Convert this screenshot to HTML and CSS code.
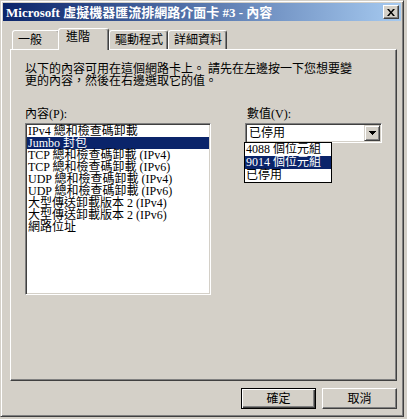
FILE: index.html
```html
<!DOCTYPE html>
<html lang="zh-Hant">
<head>
    <meta charset="UTF-8">
    <title>Microsoft 虛擬機器匯流排網路介面卡 #3 - 內容</title>
    <link rel="stylesheet" href="styles.css">
</head>
<body>

    <!-- Property sheet window -->
    <div class="window">
        <div class="titlebar">
            <span class="title">Microsoft 虛擬機器匯流排網路介面卡 #3 - 內容</span>
            <button class="close" type="button" aria-label="關閉">
                <svg width="8" height="7" viewBox="0 0 8 7"><path d="M0 0h2l2 2.5L6 0h2L5 3.5 8 7H6L4 4.5 2 7H0l3-3.5z"/></svg>
            </button>
        </div>

        <div class="content">
            <!-- Tabs -->
            <div class="tabs">
                <div class="tab tab-general">一般</div>
                <div class="tab tab-active">進階</div>
                <div class="tab tab-wide">驅動程式</div>
                <div class="tab tab-wide">詳細資料</div>
            </div>

            <!-- Advanced page -->
            <div class="panel">
                <p class="intro">以下的內容可用在這個網路卡上。 請先在左邊按一下您想要變更的內容，然後在右邊選取它的值。</p>

                <div class="fields">
                    <div class="field-list">
                        <label class="field-label">內容(P):</label>
                        <ul class="listbox">
                            <li>IPv4 總和檢查碼卸載</li>
                            <li class="selected">Jumbo 封包</li>
                            <li>TCP 總和檢查碼卸載 (IPv4)</li>
                            <li>TCP 總和檢查碼卸載 (IPv6)</li>
                            <li>UDP 總和檢查碼卸載 (IPv4)</li>
                            <li>UDP 總和檢查碼卸載 (IPv6)</li>
                            <li>大型傳送卸載版本 2 (IPv4)</li>
                            <li>大型傳送卸載版本 2 (IPv6)</li>
                            <li>網路位址</li>
                        </ul>
                    </div>

                    <div class="field-value">
                        <label class="field-label value-label">數值(V):</label>
                        <div class="combo">
                            <span class="combo-text">已停用</span>
                            <span class="combo-button">
                                <svg width="7" height="4" viewBox="0 0 7 4"><path d="M0 0h7v1H6v1H5v1H4v1H3V3H2V2H1V1H0z"/></svg>
                            </span>
                            <ul class="dropdown">
                                <li>4088 個位元組</li>
                                <li class="selected">9014 個位元組</li>
                                <li>已停用</li>
                            </ul>
                        </div>
                    </div>
                </div>
            </div>

            <!-- Dialog buttons -->
            <div class="actions">
                <button class="btn btn-default" type="button">確定</button>
                <button class="btn" type="button">取消</button>
            </div>
        </div>
    </div>

</body>
</html>
```

FILE: styles.css
```css
* {
    box-sizing: border-box;
}

body {
    margin: 0;
    background-color: #d4d0c8;
    font-family: "Liberation Serif", "Noto Sans CJK TC", serif;
    font-size: 12px;
    line-height: 12px;
    color: #000;
}

.window {
    width: 404px;
    height: 417px;
    padding: 2px;
    border: 1px solid;
    border-color: #d4d0c8 #404040 #404040 #d4d0c8;
    box-shadow: inset 1px 1px #fff, inset -1px -1px #808080;
    display: flex;
    flex-direction: column;
}

/* Title bar */
.titlebar {
    height: 18px;
    padding: 0 2px 0 3px;
    background: linear-gradient(to right, #0a246a, #a6caf0);
    display: flex;
    align-items: center;
    justify-content: space-between;
}

.title {
    color: #fff;
    font-weight: bold;
    font-size: 13px;
    line-height: 13px;
    white-space: nowrap;
}

.close {
    width: 16px;
    height: 14px;
    margin: 0;
    padding: 0;
    background-color: #d4d0c8;
    border: 1px solid;
    border-color: #fff #404040 #404040 #fff;
    box-shadow: inset -1px -1px #808080;
    display: flex;
    align-items: center;
    justify-content: center;
}

.content {
    flex: 1;
    padding: 7px 4px 0 7px;
    display: flex;
    flex-direction: column;
}

/* Tabs */
.tabs {
    height: 21px;
    padding-left: 2px;
    display: flex;
    align-items: flex-end;
}

.tab {
    height: 19px;
    padding: 3px 0 0 5px;
    background-color: #d4d0c8;
    border: 1px solid;
    border-bottom: 0;
    border-color: #fff #404040 transparent #fff;
    border-radius: 3px 3px 0 0;
    box-shadow: inset -1px 0 #808080;
    white-space: nowrap;
}

.tab-general {
    width: 48px;
}

.tab-active {
    width: 51px;
    height: 22px;
    margin-left: -2px;
    margin-bottom: -1px;
    padding: 2px 0 0 7px;
    position: relative;
    z-index: 1;
}

.tab-wide {
    width: 59px;
}

/* Page */
.panel {
    height: 332px;
    padding: 13px 14px 0 14px;
    border: 1px solid;
    border-color: #fff #404040 #404040 #fff;
    box-shadow: inset -1px -1px #808080;
}

.intro {
    width: 332px;
    margin: 0;
}

.fields {
    display: flex;
    margin-top: 21px;
}

.field-label {
    display: block;
    height: 12px;
    margin-bottom: 3px;
}

.field-list {
    width: 186px;
}

.listbox,
.combo {
    background-color: #fff;
    border: 1px solid;
    border-color: #808080 #fff #fff #808080;
    box-shadow: inset 1px 1px #404040, inset -1px -1px #d4d0c8;
}

.listbox {
    height: 172px;
    margin: 0;
    padding: 1px;
    list-style-type: none;
}

.listbox li {
    height: 12px;
    padding-left: 1px;
    white-space: nowrap;
}

.listbox li:first-child {
    margin-top: 0;
}

.listbox li.selected,
.dropdown li.selected {
    background-color: #0a246a;
    color: #fff;
}

.field-value {
    width: 137px;
    margin-left: 34px;
}

.value-label {
    padding-left: 2px;
}

.combo {
    position: relative;
    height: 20px;
    padding: 1px;
    display: flex;
    align-items: center;
}

.combo-text {
    padding-left: 2px;
}

.combo-button {
    width: 16px;
    height: 16px;
    margin-left: auto;
    background-color: #d4d0c8;
    border: 1px solid;
    border-color: #d4d0c8 #404040 #404040 #d4d0c8;
    box-shadow: inset 1px 1px #fff, inset -1px -1px #808080;
    display: flex;
    align-items: center;
    justify-content: center;
}

.dropdown {
    position: absolute;
    top: 100%;
    left: -2px;
    width: 88px;
    margin: 0;
    padding: 0;
    list-style-type: none;
    background-color: #fff;
    border: 1px solid #000;
}

.dropdown li {
    height: 13px;
    line-height: 13px;
    padding-left: 1px;
    white-space: nowrap;
}

/* Buttons */
.actions {
    margin-top: 7px;
    display: flex;
    justify-content: flex-end;
    gap: 6px;
}

.btn {
    width: 75px;
    height: 21px;
    margin: 0;
    padding: 0;
    font: inherit;
    color: #000;
    background-color: #d4d0c8;
    border: 1px solid;
    border-color: #fff #404040 #404040 #fff;
    box-shadow: inset -1px -1px #808080;
}

.btn-default {
    border-color: #000;
    box-shadow: inset 1px 1px #fff, inset -1px -1px #404040, inset -2px -2px #808080;
}
```
